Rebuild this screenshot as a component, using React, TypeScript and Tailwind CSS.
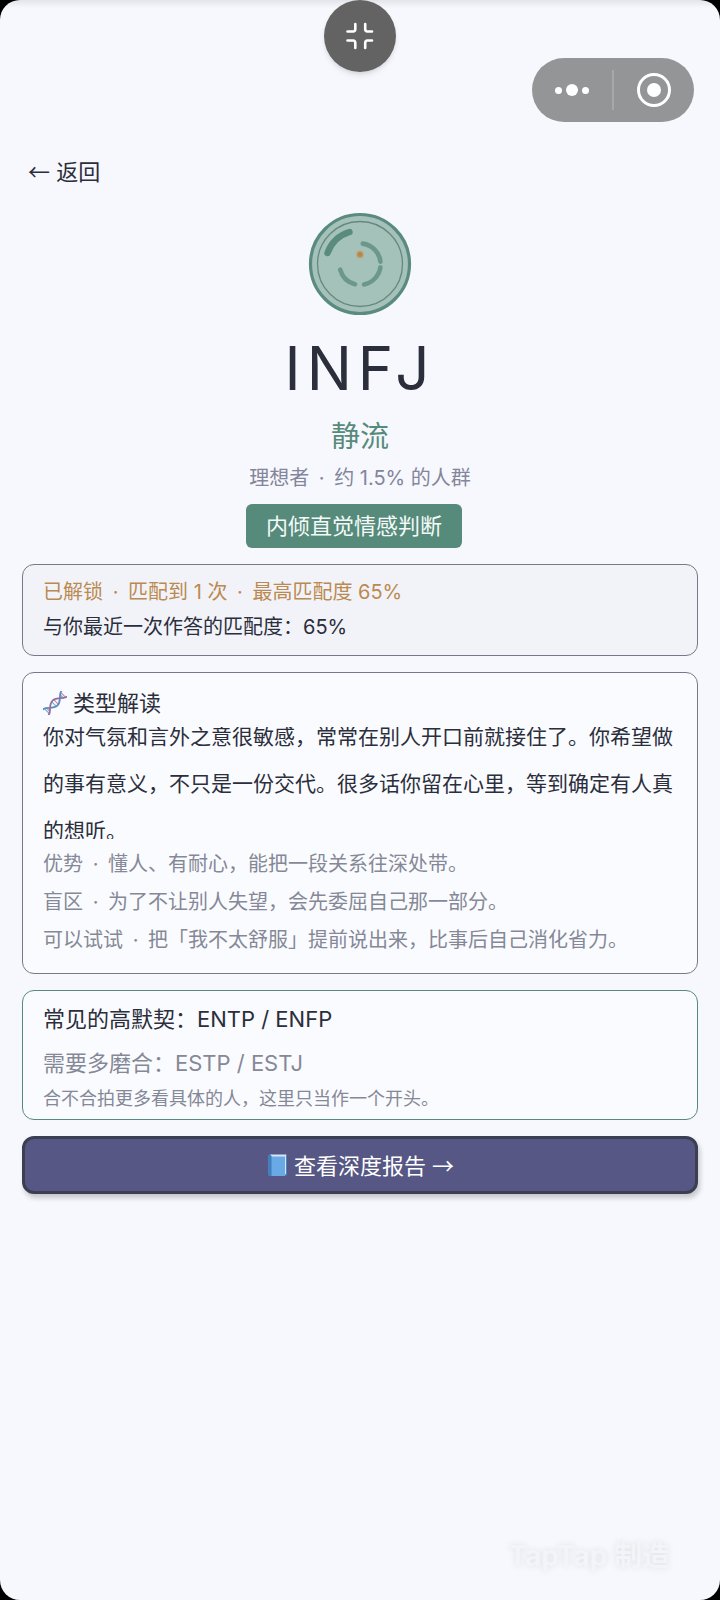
import type { ReactNode } from "react";

const traits = [
  { label: "优势", text: "懂人、有耐心，能把一段关系往深处带。" },
  { label: "盲区", text: "为了不让别人失望，会先委屈自己那一部分。" },
  { label: "可以试试", text: "把「我不太舒服」提前说出来，比事后自己消化省力。" },
];

function Card({ className, children }: { className: string; children: ReactNode }) {
  return <section className={`rounded-xl border px-5 ${className}`}>{children}</section>;
}

function Dot() {
  return <span className="px-1"> · </span>;
}

function Arrow({ children }: { children: string }) {
  return <span className="font-['Noto_Sans_CJK_SC',sans-serif]">{children}</span>;
}

function TypeEmblem() {
  return (
    <svg className="size-[104px]" viewBox="8 8 104 104" fill="none" strokeLinecap="round">
      <circle cx="60" cy="60" r="49.5" fill="#a4c1ba" stroke="#5a8b7e" strokeWidth="3.2" />
      <circle cx="60" cy="60" r="42.5" stroke="#68887f" strokeWidth="1.3" />
      <path d="M27.5 49A34 34 0 0 1 49.5 28" stroke="#5a8b7e" strokeWidth="6.4" />
      <g stroke="#6b988c" strokeWidth="4.6">
        <path d="M62.8 39.6A20.6 20.6 0 0 1 80.4 57.6" />
        <path d="M80.4 63.4A20.6 20.6 0 0 1 64 80.4" />
        <path d="M55 80.2A20.6 20.6 0 0 1 40.2 65.6" />
      </g>
      <circle cx="60" cy="50.4" r="4" fill="#b9ab84" />
      <circle cx="60" cy="50.4" r="2.6" fill="#b5894c" />
    </svg>
  );
}

function DnaIcon() {
  return (
    <svg className="size-6" viewBox="0 0 24 24" fill="none" strokeLinecap="round">
      <g transform="translate(12 12) rotate(-45)">
        <path d="M-11.5 -2.5v5M-1.5 -3v6M9.5 -2.5v5" stroke="#6fb0d8" strokeWidth="1.2" />
        <path d="M-9.5 -2v4M1.5 -3v6M11.5 -2.5v5" stroke="#c987a4" strokeWidth="1.2" />
        <path d="M-13 -4C-9 -4 -6 3.5 0 3.5S9 -4 13 -4" stroke="#5d8cc0" strokeWidth="1.8" />
        <path d="M-13 4C-9 4 -6 -3.5 0 -3.5S9 4 13 4" stroke="#93709f" strokeWidth="1.8" />
      </g>
    </svg>
  );
}

function BookIcon() {
  return (
    <svg className="size-6" viewBox="0 0 24 24">
      <path d="M4 1.5h16.5v20H4z" fill="#d5e6f5" />
      <path d="M2.5 3Q2.5 1.5 4.5 1.5L5.5 3.5H19V23H4Q2.5 23 2.5 21z" fill="#68a9e6" />
      <path d="M2.5 3Q2.5 1.5 4.5 1.5L5.5 3.5V23H4Q2.5 23 2.5 21z" fill="#3f7fc0" />
      <path d="M20 2h1v20.5h-2v-1h1z" fill="#4a86c4" />
    </svg>
  );
}

export default function App() {
  return (
    <div className="min-h-screen bg-black font-['Inter','Noto_Sans_CJK_SC',sans-serif] text-[#2b2e3b]">
      <div className="relative flex min-h-screen flex-col overflow-hidden rounded-[20px] bg-[#f7f8fd]">
        <div className="absolute inset-x-0 top-0 h-2 bg-gradient-to-b from-black/8 to-transparent" />

        {/* Host controls */}
        <button
          type="button"
          aria-label="退出全屏"
          className="absolute top-0 left-1/2 flex size-[72px] -translate-x-1/2 items-center justify-center rounded-full bg-[#636363] shadow-md"
        >
          <svg className="size-7" viewBox="0 0 28 28" fill="none" stroke="#fff" strokeWidth="2.6" strokeLinecap="round">
            <path d="M1.5 9.5H7Q9.3 9.5 9.3 7V2" />
            <path d="M26 9.5h-4.5Q19.2 9.5 19.2 7V2" />
            <path d="M1.5 18.5H7Q9.3 18.5 9.3 21v5" />
            <path d="M26 18.5h-4.5Q19.2 18.5 19.2 21v5" />
          </svg>
        </button>
        <div className="absolute top-[58px] right-[26px] flex h-16 w-[162px] items-center rounded-full bg-[#949597]">
          <button type="button" aria-label="更多" className="flex h-full flex-1 items-center justify-center gap-1">
            <span className="size-[7px] rounded-full bg-white" />
            <span className="size-3 rounded-full bg-white" />
            <span className="size-[7px] rounded-full bg-white" />
          </button>
          <span className="h-10 w-0.5 bg-[#a7a8aa]" />
          <button type="button" aria-label="关闭" className="flex h-full flex-1 items-center justify-center">
            <span className="flex size-[34px] items-center justify-center rounded-full border-[3px] border-white">
              <span className="size-[14px] rounded-full bg-white" />
            </span>
          </button>
        </div>

        <main className="flex flex-1 flex-col px-[22px] pt-[154px]">
          <a href="#back" className="self-start px-1.5 text-[22px] leading-8">
            <Arrow>←</Arrow> 返回
          </a>

          {/* Type summary */}
          <header className="mt-6 flex flex-col items-center">
            <TypeEmblem />
            <h1 className="mt-4 text-[60px] leading-[72px] tracking-widest">INFJ</h1>
            <p className="mt-3 text-[29px] leading-[42px] text-[#568a7b]">静流</p>
            <p className="mt-0.5 text-[20px] leading-9 text-[#83859a]">
              理想者
              <Dot />约 1.5% 的人群
            </p>
            <p className="mt-2 mr-3 rounded-md bg-[#568a7b] px-5 text-[22px] leading-[44px] text-[#f4faf8]">
              内倾直觉情感判断
            </p>
          </header>

          <Card className="mt-4 border-[#77798b] bg-[#f2f3f9] py-2.5 text-[20px] leading-[35px]">
            <p className="text-[#bb8a50]">
              已解锁
              <Dot />
              匹配到 1 次
              <Dot />
              最高匹配度 65%
            </p>
            <p>与你最近一次作答的匹配度：65%</p>
          </Card>

          <Card className="mt-4 border-[#77798b] bg-[#fafbfe] py-3.5">
            <h2 className="flex items-center gap-1.5 text-[22px] leading-8">
              <DnaIcon />
              类型解读
            </h2>
            <div className="mt-2 h-28 overflow-hidden">
              <p className="-mt-3.5 text-[21px] leading-[47px]">
                你对气氛和言外之意很敏感，常常在别人开口前就接住了。你希望做的事有意义，不只是一份交代。很多话你留在心里，等到确定有人真的想听。
              </p>
            </div>
            <ul className="mt-1.5 text-[20px] leading-[38px] text-[#858897]">
              {traits.map(({ label, text }) => (
                <li key={label}>
                  {label}
                  <Dot />
                  {text}
                </li>
              ))}
            </ul>
          </Card>

          <Card className="mt-4 border-[#568a7b] bg-[#fafbfe] py-1.5 text-[22px] leading-[44px]">
            <p>常见的高默契：ENTP / ENFP</p>
            <p className="text-[#858897]">需要多磨合：ESTP / ESTJ</p>
            <p className="text-[18px] leading-7 text-[#858897]">合不合拍更多看具体的人，这里只当作一个开头。</p>
          </Card>

          <button
            type="button"
            className="mt-4 flex items-center justify-center gap-1 rounded-xl border-[3px] border-[#3c3e52] bg-[#565784] py-2 text-[22px] leading-[34px] text-white shadow-[2px_4px_5px_rgba(0,0,0,0.2)]"
          >
            <BookIcon />
            <span>
              查看深度报告 <Arrow>→</Arrow>
            </span>
          </button>

          <p className="mt-auto self-end pr-7 pb-6 text-[28px] leading-10 font-bold text-[#f3f4f8] [text-shadow:0_0_6px_#dfe0e5]">
            TapTap 制造
          </p>
        </main>
      </div>
    </div>
  );
}
